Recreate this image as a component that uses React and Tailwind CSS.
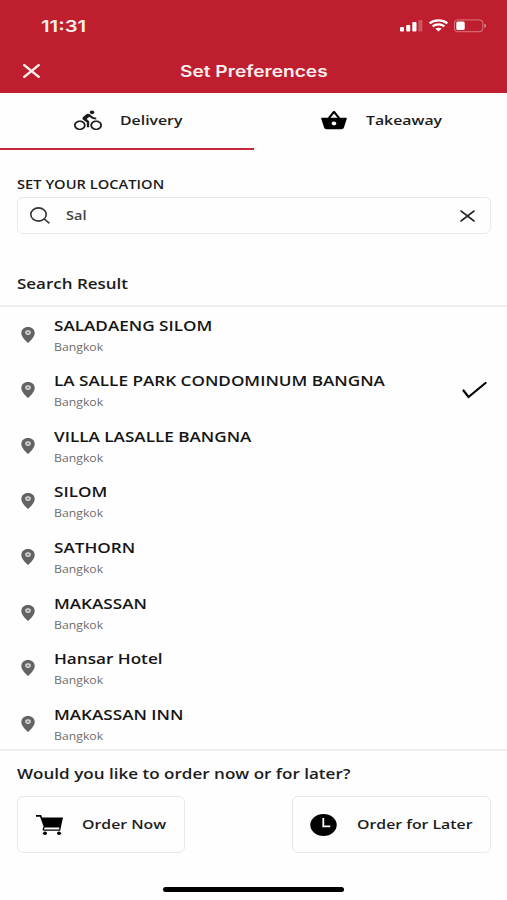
import React from "react";
import { MdDirectionsBike, MdShoppingBasket } from "react-icons/md";

const places = [
  "SALADAENG SILOM",
  "LA SALLE PARK CONDOMINUM BANGNA",
  "VILLA LASALLE BANGNA",
  "SILOM",
  "SATHORN",
  "MAKASSAN",
  "Hansar Hotel",
  "MAKASSAN INN",
];

// Wide-set text: stretched sideways from its left edge.
function Wide({ className = "", stretch = "scale-x-[1.19]", children }) {
  return (
    <span className={`inline-block origin-left whitespace-nowrap ${stretch} ${className}`}>
      {children}
    </span>
  );
}

function Cross({ className, width }) {
  return (
    <svg className={className} viewBox="0 0 16 14" preserveAspectRatio="none" fill="none" stroke="currentColor" strokeWidth={width} strokeLinecap="round">
      <path d="M1.2 1.2 14.8 12.8M14.8 1.2 1.2 12.8" />
    </svg>
  );
}

function Pin() {
  return (
    <svg className="h-4 w-[14px] shrink-0 text-[#636363]" viewBox="0 0 14 16">
      <path fill="currentColor" d="M7 0C3 0 .3 2.600.3 6c0 3.600 3.700 7.400 6.700 10 3-2.600 6.700-6.400 6.700-10C13.700 2.600 11 0 7 0Z" />
      <ellipse cx="7" cy="5.600" rx="2.200" ry="1.800" fill="#8a8a8a" stroke="#e2e2e2" strokeWidth="1.200" />
    </svg>
  );
}

function StatusIcons() {
  return (
    <svg className="h-[14px] w-[88px]" viewBox="0 0 88 14" fill="#fff">
      <rect x="1" y="8" width="4" height="4.500" rx="1" />
      <rect x="7.200" y="6" width="4" height="6.500" rx="1" />
      <rect x="13.300" y="3" width="4.200" height="9.500" rx="1" />
      <rect x="19.400" y="1" width="4" height="11.500" rx="1" opacity=".25" />
      <g fill="none" stroke="#fff" strokeWidth="2.200">
        <path d="M30.600 4.300C35.400.300 43.600.300 48.400 4.300" />
        <path d="M33.600 7.400c3.200-2.600 8.600-2.600 11.800 0" />
      </g>
      <path d="M36.300 9.600c1.800-1.300 4.600-1.300 6.400 0L39.500 12.400Z" />
      <rect x="55.400" y=".900" width="28.500" height="11.800" rx="3.200" fill="none" stroke="#fff" strokeOpacity=".4" />
      <path d="M85.400 4.800c2.200.700 2.200 3.300 0 4Z" opacity=".5" />
      <rect x="57.300" y="2.600" width="8.400" height="8.400" rx="1.500" />
    </svg>
  );
}

function Cart() {
  return (
    <svg className="h-5 w-[27px] shrink-0" viewBox="0 0 27 20">
      <path d="M0 0h5.200l.9 2.400H27l-2.200 10H8L4 1.800H0Z" />
      <path d="m24.300 12-.7 3.200H7.200M8 12l-.9 3.200" fill="none" stroke="#000" strokeWidth="1.300" />
      <ellipse cx="9" cy="18.300" rx="2" ry="1.700" />
      <ellipse cx="23" cy="18.300" rx="2" ry="1.700" />
    </svg>
  );
}

function Clock() {
  return (
    <svg className="h-[22px] w-[27px] shrink-0" viewBox="0 0 27 22">
      <ellipse cx="13.500" cy="11" rx="13.200" ry="10.900" />
      <path d="M13.300 4v8.400h7" fill="none" stroke="#fff" strokeWidth="1.800" />
    </svg>
  );
}

export default function App() {
  return (
    <div className="flex h-[900px] w-[507px] flex-col overflow-hidden bg-[#fefefe] font-['Open_Sans',sans-serif] font-semibold text-[#1c1c1c]">
      <header className="h-[93px] shrink-0 bg-[#be1e2d] font-['Inter',sans-serif] text-[#fdeeee]">
        <div className="flex h-[52px] items-center justify-between pl-[41px] pr-[20px]">
          <Wide stretch="scale-x-[1.23]" className="text-[16.500px]">11:31</Wide>
          <StatusIcons />
        </div>
        <div className="flex h-[38px] items-center pl-[23px]">
          <Cross className="h-[14px] w-[17px]" width="2.400" />
          <Wide stretch="scale-x-[1.235]" className="ml-[140px] pt-px text-[15.500px]">Set Preferences</Wide>
        </div>
      </header>

      <nav className="grid h-[57px] shrink-0 grid-cols-2 text-[13.300px]">
        <div className="flex items-center border-b-2 border-[#c4283a] pl-[74px]">
          <MdDirectionsBike className="h-[23px] w-[28px]" preserveAspectRatio="none" />
          <Wide className="ml-[18px]">Delivery</Wide>
        </div>
        <div className="flex items-center border-b-2 border-transparent pl-[66px]">
          <MdShoppingBasket className="h-[23px] w-[28px] text-black" preserveAspectRatio="none" />
          <Wide className="ml-[18px]">Takeaway</Wide>
        </div>
      </nav>

      <section className="h-[157px] shrink-0 border-b-2 border-[#eeeeee] pl-[17px] pr-4 pt-[21px]">
        <Wide stretch="scale-x-[1.205]" className="block h-[22px] text-[12.200px] leading-[19px]">SET YOUR LOCATION</Wide>
        <div className="flex h-[37px] items-center rounded-md border border-[#e8e8e8] pl-[12px] pr-[15px] text-[#444]">
          <svg className="h-[17px] w-[20px]" viewBox="0 0 20 17" fill="none" stroke="#333" strokeWidth="1.600" strokeLinecap="round">
            <ellipse cx="8.500" cy="7.500" rx="7.700" ry="6.600" />
            <path d="m14.300 12 4.600 3.800" />
          </svg>
          <Wide className="ml-[16px] pt-px text-[12.200px]">Sal</Wide>
          <Cross className="ml-auto h-[12px] w-[15px] text-[#222]" width="1.900" />
        </div>
        <Wide stretch="scale-x-[1.18]" className="mt-[38px] block text-[14.400px] leading-[24px]">Search Result</Wide>
      </section>

      <ul className="h-[442px] shrink-0 overflow-hidden">
        {places.map((name, i) => (
          <li key={name} className="flex h-[55.570px] items-center pl-[21px] pr-[20px]">
            <Pin />
            <div className="ml-[19px] flex flex-col items-start pt-[2px]">
              <Wide className="text-[14.400px] leading-[22px] text-[#151515]">{name}</Wide>
              <Wide className="text-[10.300px] font-normal leading-[20px] text-[#6c6c6c]">Bangkok</Wide>
            </div>
            {i === 1 && (
              <svg className="ml-auto h-[18px] w-[26px]" viewBox="0 0 26 18" fill="none" stroke="#000" strokeWidth="2.200" strokeLinecap="round">
                <path d="M2.500 9.500 7.500 16 24.500 2" />
              </svg>
            )}
          </li>
        ))}
      </ul>

      <footer className="flex-1 border-t-2 border-[#eeeeee] pl-[17px] pr-4">
        <Wide stretch="scale-x-[1.185]" className="mt-[11px] block text-[14.400px] leading-[24px]">Would you like to order now or for later?</Wide>
        <div className="mt-[10px] flex justify-between text-[13.300px]">
          <button className="flex h-[57px] w-[168px] items-center rounded-md border border-[#e8e8e8] pl-[18px]">
            <Cart />
            <Wide className="ml-[19px]">Order Now</Wide>
          </button>
          <button className="flex h-[57px] w-[199px] items-center rounded-md border border-[#e8e8e8] pl-[17px]">
            <Clock />
            <Wide className="ml-[20px]">Order for Later</Wide>
          </button>
        </div>
        <div className="ml-[146px] mt-[34px] h-[5px] w-[181px] rounded-full bg-black" />
      </footer>
    </div>
  );
}
